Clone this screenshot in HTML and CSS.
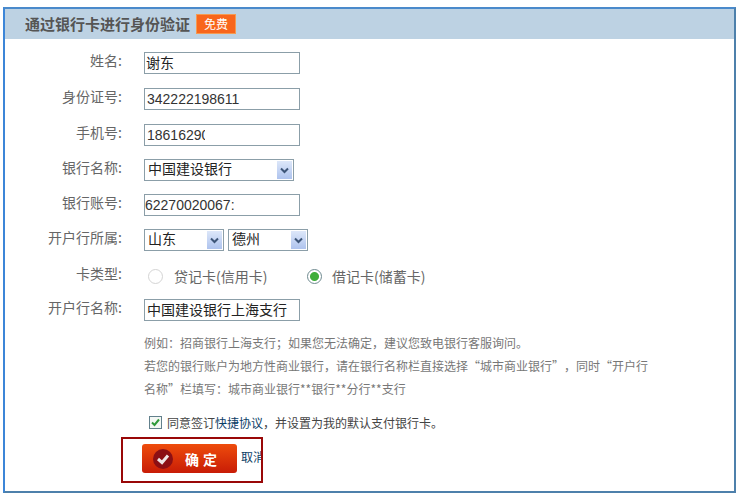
FILE: index.html
```html
<!DOCTYPE html>
<html lang="zh-CN">
<head>
<meta charset="utf-8">
<title>通过银行卡进行身份验证</title>
<link rel="stylesheet" href="styles.css">
</head>
<body>
<section class="panel">
  <header class="panel-head">
    <h2 class="panel-title">通过银行卡进行身份验证</h2>
    <span class="badge">免费</span>
  </header>
  <form class="form">
    <div class="row">
      <label class="label">姓名:</label>
      <input class="input input-name" value="谢东">
    </div>
    <div class="row row-loose">
      <label class="label">身份证号:</label>
      <input class="input" value="342222198611">
    </div>
    <div class="row row-loose">
      <label class="label">手机号:</label>
      <input class="input input-clip" value="18616290">
    </div>
    <div class="row">
      <label class="label">银行名称:</label>
      <div class="select select-wide"><span class="select-text">中国建设银行</span>
        <span class="select-btn"><svg width="9" height="7" viewBox="0 0 9 7"><path d="M1 1.5 4.5 5 8 1.5" fill="none" stroke="#3d5578" stroke-width="2"/></svg></span>
      </div>
    </div>
    <div class="row">
      <label class="label">银行账号:</label>
      <input class="input input-tight" value="62270020067:">
    </div>
    <div class="row">
      <label class="label">开户行所属:</label>
      <div class="select select-narrow"><span class="select-text">山东</span>
        <span class="select-btn"><svg width="9" height="7" viewBox="0 0 9 7"><path d="M1 1.5 4.5 5 8 1.5" fill="none" stroke="#3d5578" stroke-width="2"/></svg></span>
      </div>
      <div class="select select-narrow"><span class="select-text">德州</span>
        <span class="select-btn"><svg width="9" height="7" viewBox="0 0 9 7"><path d="M1 1.5 4.5 5 8 1.5" fill="none" stroke="#3d5578" stroke-width="2"/></svg></span>
      </div>
    </div>
    <div class="row row-loose row-radio">
      <label class="label">卡类型:</label>
      <div class="radios">
        <span class="radio-item radio-first"><span class="radio"></span>贷记卡(信用卡)</span>
        <span class="radio-item"><span class="radio radio-on"></span>借记卡(储蓄卡)</span>
      </div>
    </div>
    <div class="row">
      <label class="label">开户行名称:</label>
      <input class="input input-bank" value="中国建设银行上海支行">
    </div>
    <div class="hint">
      <p>例如&#xFF1A;招商银行上海支行&#xFF1B;如果您无法确定&#xFF0C;建议您致电银行客服询问。</p>
      <p>若您的银行账户为地方性商业银行&#xFF0C;请在银行名称栏直接选择&#x201C;城市商业银行&#x201D;&#xFF0C;同时&#x201C;开户行</p>
      <p>名称&#x201D;栏填写&#xFF1A;城市商业银行**银行**分行**支行</p>
    </div>
    <div class="agree">
      <span class="check"><svg width="9" height="9" viewBox="0 0 9 9"><path d="M1 4.5 3.5 7 8 1.5" fill="none" stroke="#2f9a3a" stroke-width="2"/></svg></span>
      <span>同意签订<a class="link" href="#">快捷协议</a>&#xFF0C;并设置为我的默认支付银行卡。</span>
    </div>
    <div class="actions">
      <button class="submit" type="button">
        <span class="submit-icon"><svg width="14" height="12" viewBox="0 0 14 12"><path d="M2 6 6 9.5 12 2.5" fill="none" stroke="#efe6e6" stroke-width="3"/></svg></span>
        <span class="submit-text">确定</span>
      </button>
      <a class="cancel" href="#">取消</a>
    </div>
  </form>
</section>
</body>
</html>
```
FILE: styles.css
```css
*, *::after { box-sizing: border-box; }
html, body { margin: 0; padding: 0; background: #fff; }
body {
  padding: 7px 0 0 3px;
  font-family: "Noto Sans CJK SC", "Liberation Sans", sans-serif;
  font-size: 13px;
  color: #666;
}
p { margin: 0; }
.panel {
  width: 733px;
  height: 486px;
  border: 2px solid #4d80ab;
  border-left-color: #3c86d8;
  border-top-color: #4a8acb;
  background: #fff;
}
.panel-head {
  display: flex;
  align-items: center;
  height: 30px;
  padding: 0 0 0 20px;
  background: #bdd2e3;
}
.panel-title {
  margin: 0;
  font-size: 15px;
  line-height: 20px;
  font-weight: bold;
  color: #555;
}
.badge {
  width: 40px;
  height: 20px;
  margin-left: 6px;
  border: 1px solid #f59a50;
  background: #f8661c;
  color: #fff;
  font-size: 12px;
  line-height: 18px;
  text-align: center;
}
.form {
  display: flex;
  flex-direction: column;
  gap: 13px;
  padding-top: 13px;
}
.row { display: flex; align-items: center; height: 22px; }
.row-loose { margin-top: 1px; }
.row-radio { height: 21px; }
.label {
  width: 117px;
  margin-right: 22px;
  text-align: right;
  font-size: 14px;
  line-height: 18px;
  color: #666;
  position: relative;
  top: -3px;
}
.input {
  width: 156px;
  height: 22px;
  padding: 0 2px;
  border: 1px solid #8b9ea8;
  outline: none;
  background: #fff;
  font-family: "Liberation Sans", "Noto Sans CJK SC", sans-serif;
  font-size: 14px;
  color: #333;
}
.input-name, .input-bank {
  padding-left: 1px;
  padding-bottom: 3px;
  font-family: "Noto Sans CJK SC", sans-serif;
  color: #222;
}
.input-bank { padding-left: 2px; padding-right: 0; }
.input-clip { padding-right: 94px; }
.input-tight { padding-left: 0; }
.select {
  display: flex;
  align-items: center;
  justify-content: space-between;
  height: 22px;
  padding: 0 1px 0 3px;
  border: 1px solid #8b9ea8;
  background: #fff;
  font-size: 14px;
  color: #222;
}
.select + .select { margin-left: 4px; }
.select-wide { width: 150px; }
.select-narrow { width: 80px; }
.select-text { line-height: 20px; position: relative; top: -2px; }
.select-btn {
  display: flex;
  align-items: center;
  justify-content: center;
  width: 15px;
  height: 18px;
  background: linear-gradient(#dde7f9, #aec3ee);
}
.radios { display: flex; align-items: center; margin-left: 4px; color: #666; padding-top: 1px; }
.radio-item { display: flex; align-items: center; font-size: 14px; line-height: 18px; }
.radio-first { width: 159px; }
.radio {
  width: 15px;
  height: 15px;
  margin-right: 11px;
  border: 1px solid #d4d4d4;
  border-radius: 50%;
  background: #fff;
}
.radio-on {
  margin-right: 10px;
  border: 1px solid #6f8a90;
  background: radial-gradient(circle, #3fae3a 0 4px, #fff 5px);
}
.hint {
  margin-top: -3px;
  padding-left: 139px;
  font-size: 12px;
  line-height: 23px;
  color: #777;
  text-spacing-trim: space-all;
  font-kerning: none;
}
.agree {
  display: flex;
  align-items: center;
  height: 18px;
  padding-left: 144px;
  font-size: 12px;
  color: #444;
}
.check {
  display: flex;
  align-items: center;
  justify-content: center;
  width: 13px;
  height: 13px;
  margin-right: 5px;
  border: 1px solid #62808c;
  background: #f4f8f4;
}
.link { color: #0b3d66; text-decoration: none; }
.actions {
  position: relative;
  display: flex;
  align-items: center;
  height: 29px;
  padding-left: 137px;
}
.actions::after {
  content: "";
  position: absolute;
  left: 116px;
  top: -7px;
  width: 142px;
  height: 46px;
  border: 2px solid #990808;
  pointer-events: none;
}
.submit {
  display: flex;
  align-items: center;
  width: 95px;
  height: 29px;
  padding: 0 0 0 11px;
  border: 0;
  border-radius: 3px;
  background: linear-gradient(#ee4c0c, #c81c06);
  color: #fff;
  font-family: inherit;
}
.submit-icon {
  display: flex;
  align-items: center;
  justify-content: center;
  width: 20px;
  height: 20px;
  margin-right: 12px;
  border-radius: 50%;
  background: #8c0f14;
}
.submit-text { font-size: 14px; font-weight: bold; letter-spacing: 4px; }
.cancel {
  display: block;
  width: 22px;
  margin-left: 4px;
  margin-top: -4px;
  overflow: hidden;
  white-space: nowrap;
  font-size: 12px;
  color: #0b3d66;
  text-decoration: none;
}
```
